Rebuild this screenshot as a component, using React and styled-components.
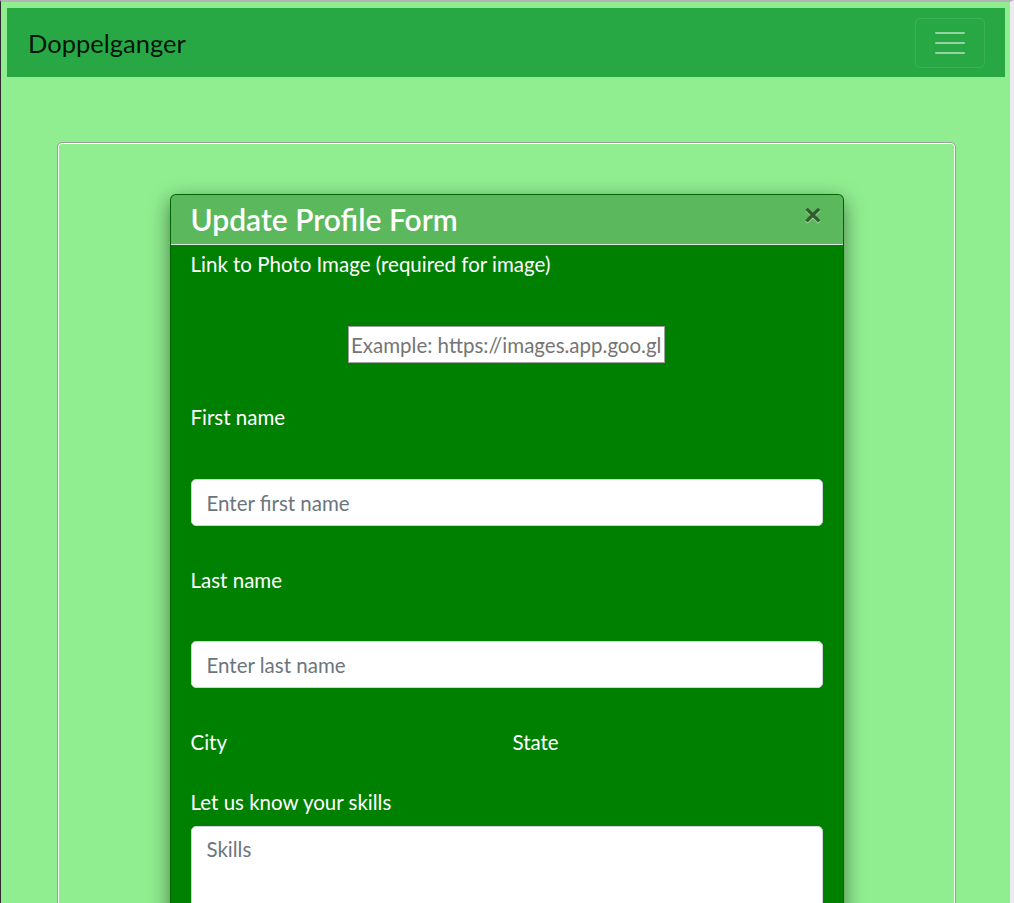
import React from "react";
import styled, { createGlobalStyle } from "styled-components";

const GlobalStyle = createGlobalStyle`
  html, body {
    margin: 0;
    padding: 0;
    background: #90ee90;
    overflow: hidden;
  }
  body {
    font-family: "Segoe UI", Lato, "Open Sans", sans-serif;
    font-size: 20px;
    line-height: 1.5;
    color: #212529;
  }
  * {
    box-sizing: border-box;
  }
`;

const Page = styled.div`
  height: 903px;
  overflow: hidden;
  background: #90ee90;
  border-top: 2px solid #b4b4b4;
  border-left: 1px solid #2b2b2b;
  border-right: 4px solid #ececec;
  padding: 6px 5px 0 6px;
`;

const Navbar = styled.nav`
  height: 69px;
  background-color: #28a745;
  display: flex;
  align-items: center;
  justify-content: space-between;
  padding: 0 20px 0 21px;
`;

const Brand = styled.a`
  font-size: 25.5px;
  line-height: 1;
  margin-top: 2px;
  color: rgba(0, 0, 0, 0.9);
  text-decoration: none;
`;

const Toggler = styled.button`
  width: 70px;
  height: 50px;
  background: transparent;
  border: 1px solid rgba(255, 255, 255, 0.1);
  border-radius: 5px;
  display: flex;
  flex-direction: column;
  align-items: center;
  justify-content: center;
  gap: 8px;
  padding: 0;
  span {
    display: block;
    width: 30px;
    height: 2px;
    border-radius: 1px;
    background: rgba(255, 255, 255, 0.5);
  }
`;

const Main = styled.main`
  padding: 65px 0 0 50px;
`;

const Card = styled.div`
  width: 899px;
  height: 800px;
  border: 1px solid #9c9c9c;
  box-shadow: inset 0 0 0 1px #fff;
  border-radius: 5px;
  padding-top: 51px;
  display: flex;
  justify-content: center;
`;

const Modal = styled.div`
  width: 674px;
  height: 760px;
  background: #008000;
  border: 1px solid rgba(0, 0, 0, 0.2);
  border-radius: 6px;
  box-shadow: 0 6px 20px rgba(0, 0, 0, 0.5);
  overflow: hidden;
`;

const ModalHeader = styled.div`
  height: 50px;
  background: #5cb85c;
  border-bottom: 1px solid #dee2e6;
  display: flex;
  align-items: flex-start;
  justify-content: space-between;
  padding: 5px 21px 0 20px;
`;

const Title = styled.h3`
  margin: 0;
  font-size: 30px;
  font-weight: 600;
  line-height: 1.3;
  color: #fff;
`;

const Close = styled.button`
  background: transparent;
  border: 0;
  padding: 0;
  font-family: Arial, "Liberation Sans", sans-serif;
  font-size: 30px;
  font-weight: 700;
  line-height: 1;
  color: #000;
  opacity: 0.5;
  text-shadow: 0 1px 0 #fff;
`;

const ModalBody = styled.div`
  padding: 7px 20px 0 20px;
  display: flex;
  flex-direction: column;
`;

const Label = styled.label`
  display: block;
  color: #fff;
  font-size: 20.5px;
  line-height: 24px;
  margin-top: ${(p) => p.$gap || 0}px;
`;

const PhotoInput = styled.input`
  align-self: center;
  margin-top: 50px;
  width: 317px;
  height: 37px;
  border: 1px solid #a0a0a0;
  padding: 1px 2px;
  font-family: inherit;
  font-size: 20.5px;
  color: #212529;
  background: #fff;
  &::placeholder {
    color: #757575;
  }
`;

const Field = styled.input`
  display: block;
  width: 100%;
  height: 47px;
  margin-top: ${(p) => p.$gap || 0}px;
  padding: 7px 15px;
  border: 1px solid #ced4da;
  border-radius: 5px;
  font-family: inherit;
  font-size: 20.5px;
  color: #495057;
  background: #fff;
  &::placeholder {
    color: #6c757d;
  }
`;

const Row = styled.div`
  display: grid;
  grid-template-columns: 322px 1fr;
  margin-top: 42px;
`;

const TextArea = styled.textarea`
  display: block;
  width: 100%;
  height: 107px;
  margin-top: 12px;
  padding: 7px 15px;
  border: 1px solid #ced4da;
  border-radius: 5px;
  font-family: inherit;
  font-size: 20.5px;
  line-height: 1.5;
  color: #495057;
  background: #fff;
  resize: vertical;
  &::placeholder {
    color: #6c757d;
  }
`;

export default function App() {
  return (
    <>
      <GlobalStyle />
      <Page>
        <Navbar>
          <Brand href="#">Doppelganger</Brand>
          <Toggler aria-label="Toggle navigation">
            <span />
            <span />
            <span />
          </Toggler>
        </Navbar>
        <Main>
          <Card>
            <Modal>
              <ModalHeader>
                <Title>Update Profile Form</Title>
                <Close aria-label="Close">×</Close>
              </ModalHeader>
              <ModalBody>
                <Label>Link to Photo Image (required for image)</Label>
                <PhotoInput placeholder="Example: https://images.app.goo.gl/..." />
                <Label $gap={42}>First name</Label>
                <Field $gap={50} placeholder="Enter first name" />
                <Label $gap={42}>Last name</Label>
                <Field $gap={49} placeholder="Enter last name" />
                <Row>
                  <Label>City</Label>
                  <Label>State</Label>
                </Row>
                <Label $gap={36}>Let us know your skills</Label>
                <TextArea placeholder="Skills" />
              </ModalBody>
            </Modal>
          </Card>
        </Main>
      </Page>
    </>
  );
}
